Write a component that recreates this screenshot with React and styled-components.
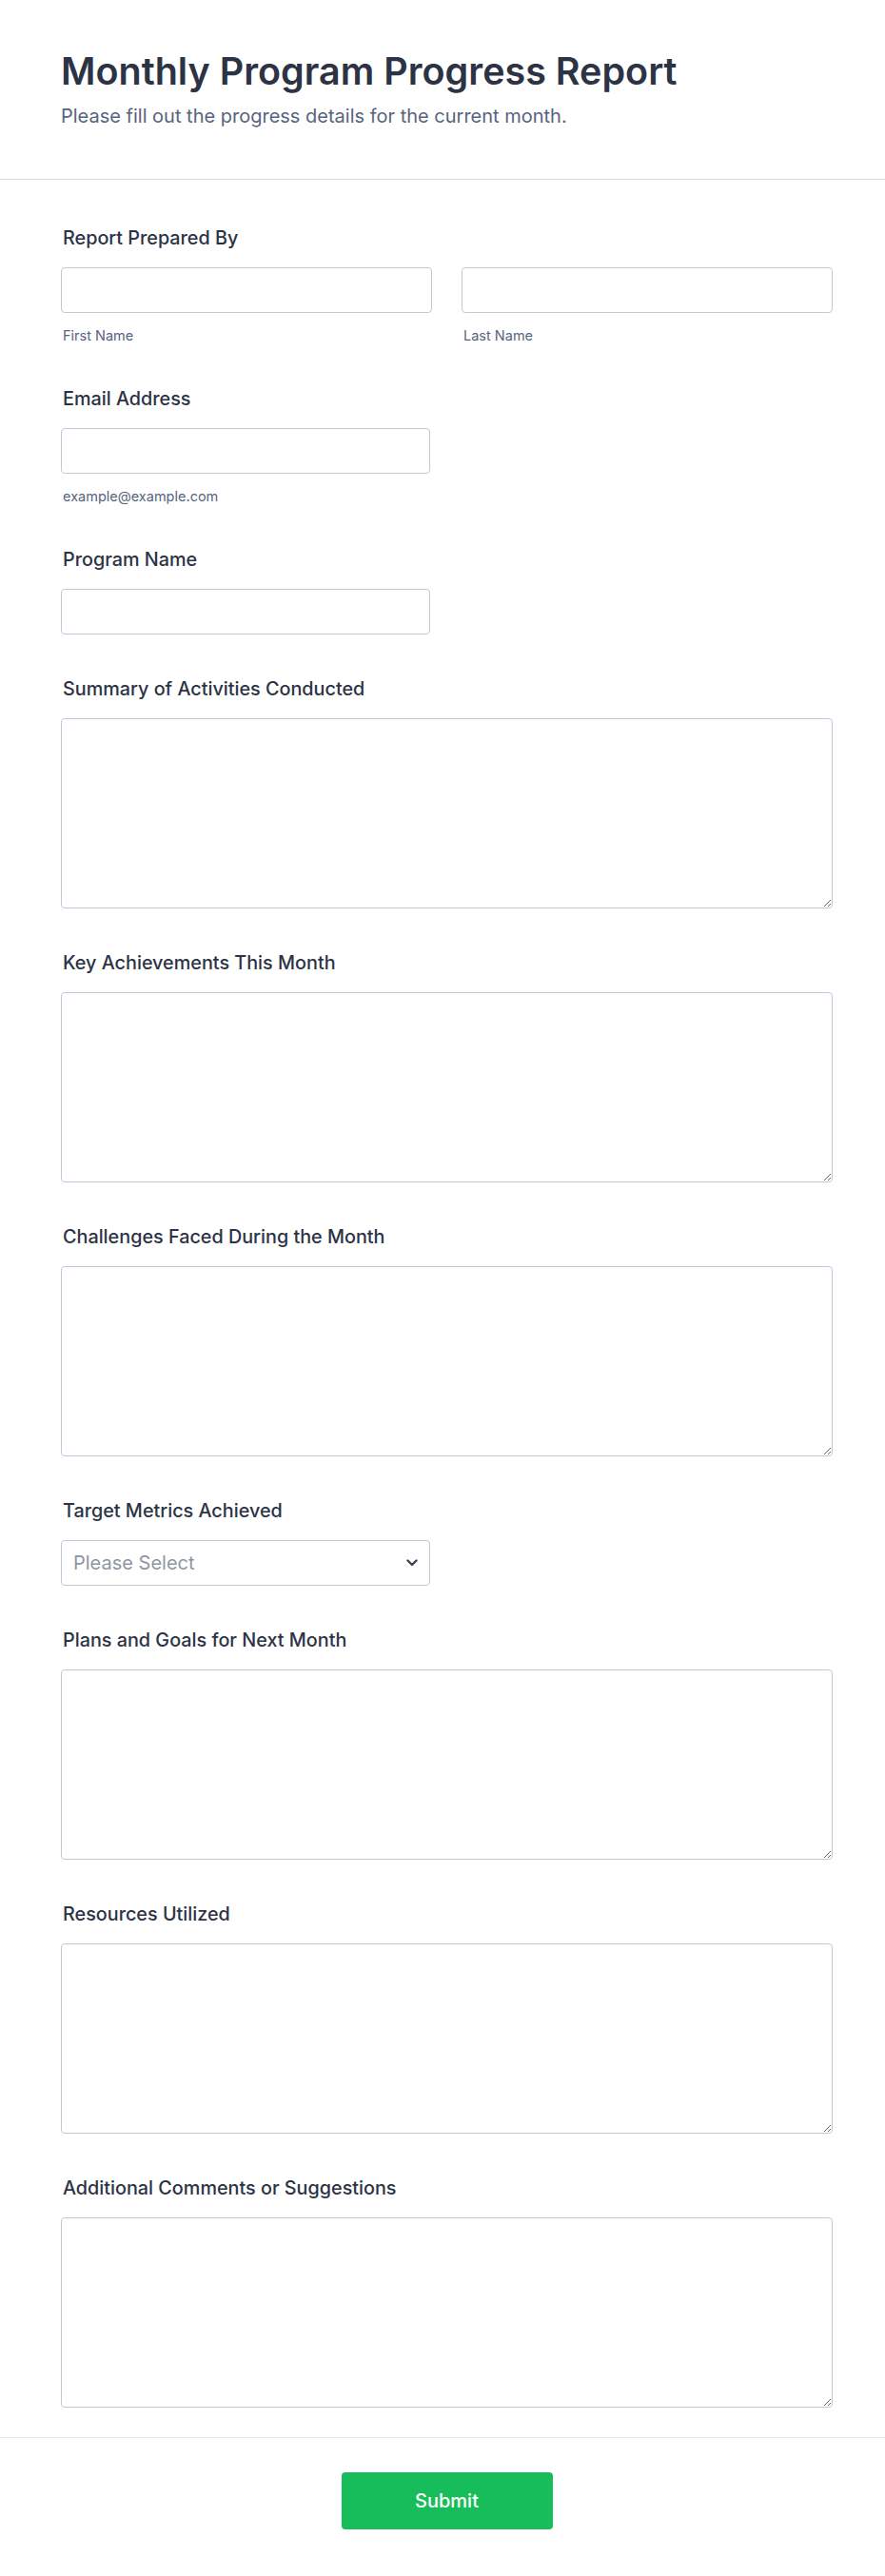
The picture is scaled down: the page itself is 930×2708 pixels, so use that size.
import React from 'react';
import styled, { createGlobalStyle } from 'styled-components';

const GlobalStyle = createGlobalStyle`
  * {
    box-sizing: border-box;
  }

  body {
    margin: 0;
    background: #ffffff;
    font-family: Inter, "Noto Sans", "Liberation Sans", sans-serif;
    color: #2c3345;
  }
`;

const Page = styled.div`
  width: 930px;
  background: #ffffff;
`;

const Header = styled.header`
  padding: 54px 55px 52px 64px;
  border-bottom: 1px solid #d8dae4;
`;

const Title = styled.h1`
  margin: 0;
  font-size: 39.5px;
  line-height: 43px;
  font-weight: 600;
  color: #2c3345;
`;

const Subtitle = styled.p`
  margin: 12px 0 0;
  font-size: 20px;
  line-height: 27px;
  color: #57647e;
`;

const Body = styled.main`
  display: flex;
  flex-direction: column;
  gap: 47px;
  padding: 51px 55px 31px 64px;
`;

const Field = styled.div`
  display: flex;
  flex-direction: column;
`;

const Label = styled.label`
  font-size: 19.8px;
  line-height: 21px;
  font-weight: 500;
  color: #2c3345;
  margin-bottom: 20px;
  padding-left: 2px;
`;

const Row = styled.div`
  display: grid;
  grid-template-columns: 1fr 1fr;
  gap: 31px;
`;

const Column = styled.div`
  display: flex;
  flex-direction: column;
`;

const Input = styled.input`
  width: ${(p) => (p.$half ? '388px' : '100%')};
  height: 48px;
  border: 1px solid #c3c8d8;
  border-radius: 4px;
  background: #fff;
  font: inherit;
  font-size: 18px;
  padding: 0 12px;
  outline: none;
`;

const Sublabel = styled.span`
  margin-top: 15px;
  font-size: 14.5px;
  line-height: 18px;
  color: #57647e;
  padding-left: 2px;
`;

const TextArea = styled.textarea`
  width: 100%;
  height: 200px;
  border: 1px solid #c3c8d8;
  border-radius: 4px;
  background: #fff;
  font: inherit;
  font-size: 18px;
  padding: 10px 12px;
  resize: vertical;
  outline: none;
  display: block;
`;

const SelectBox = styled.div`
  position: relative;
  width: 388px;
  height: 48px;
`;

const Select = styled.select`
  appearance: none;
  width: 100%;
  height: 100%;
  border: 1px solid #c3c8d8;
  border-radius: 4px;
  background: #fff;
  font-family: inherit;
  font-size: 20px;
  color: #8f96a3;
  padding: 0 40px 0 12px;
  outline: none;
`;

const Chevron = styled.svg`
  position: absolute;
  right: 13px;
  top: 50%;
  transform: translateY(-50%);
  pointer-events: none;
`;

const Footer = styled.footer`
  display: flex;
  justify-content: center;
  padding: 36px 55px 49px 64px;
  border-top: 1px solid #e6e8ef;
`;

const SubmitButton = styled.button`
  width: 222px;
  height: 60px;
  border: none;
  border-radius: 4px;
  background: #18bd5b;
  color: #ffffff;
  font-family: inherit;
  font-size: 20px;
  font-weight: 500;
  cursor: pointer;
`;

const textAreas = [
  'Summary of Activities Conducted',
  'Key Achievements This Month',
  'Challenges Faced During the Month',
];

const laterAreas = [
  'Plans and Goals for Next Month',
  'Resources Utilized',
  'Additional Comments or Suggestions',
];

const App = () => {
  return (
    <Page>
      <GlobalStyle />
      <Header>
        <Title>Monthly Program Progress Report</Title>
        <Subtitle>Please fill out the progress details for the current month.</Subtitle>
      </Header>
      <Body>
        <Field>
          <Label>Report Prepared By</Label>
          <Row>
            <Column>
              <Input type="text" />
              <Sublabel>First Name</Sublabel>
            </Column>
            <Column>
              <Input type="text" />
              <Sublabel>Last Name</Sublabel>
            </Column>
          </Row>
        </Field>
        <Field>
          <Label>Email Address</Label>
          <Input type="email" $half />
          <Sublabel>example@example.com</Sublabel>
        </Field>
        <Field>
          <Label>Program Name</Label>
          <Input type="text" $half />
        </Field>
        {textAreas.map((label) => (
          <Field key={label}>
            <Label>{label}</Label>
            <TextArea />
          </Field>
        ))}
        <Field>
          <Label>Target Metrics Achieved</Label>
          <SelectBox>
            <Select defaultValue="">
              <option value="" disabled>Please Select</option>
              <option>Yes</option>
              <option>Partially</option>
              <option>No</option>
            </Select>
            <Chevron width="12" height="8" viewBox="0 0 12 8">
              <path d="M1.5 1.5 L6 6 L10.5 1.5" fill="none" stroke="#3b4459" strokeWidth="2.4" strokeLinecap="round" strokeLinejoin="round" />
            </Chevron>
          </SelectBox>
        </Field>
        {laterAreas.map((label) => (
          <Field key={label}>
            <Label>{label}</Label>
            <TextArea />
          </Field>
        ))}
      </Body>
      <Footer>
        <SubmitButton type="submit">Submit</SubmitButton>
      </Footer>
    </Page>
  );
};

export default App;
